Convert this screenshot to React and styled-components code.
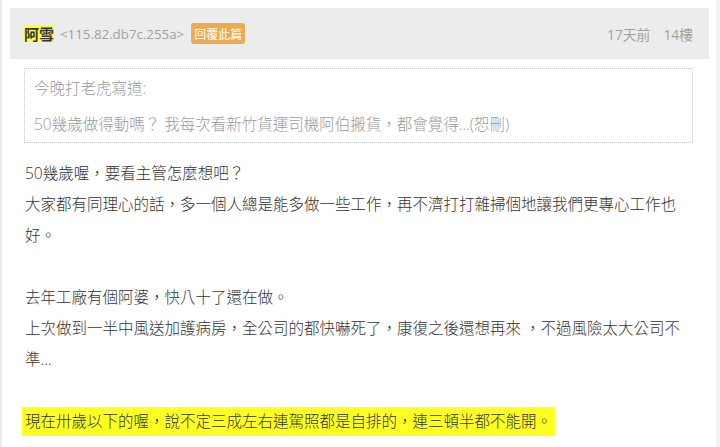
import React from "react";
import styled, { createGlobalStyle } from "styled-components";

const GlobalStyle = createGlobalStyle`
  html, body { margin: 0; padding: 0; background: #fff; }
  body { font-family: "Open Sans", "Noto Sans CJK TC", sans-serif; }
`;

const Page = styled.div`
  box-sizing: border-box;
  width: 720px;
  height: 447px;
  overflow: hidden;
  border-left: 2px solid #ededed;
  border-right: 4px solid #f2f2f2;
  padding: 8px 7px 0 8px;
`;

const Header = styled.div`
  display: flex;
  align-items: center;
  justify-content: space-between;
  height: 51px;
  background: #ececec;
  padding: 0 16px 0 14px;
`;

const Left = styled.div`
  display: flex;
  align-items: center;
  gap: 6px;
`;

const Name = styled.span`
  font-family: "Noto Sans CJK TC", sans-serif;
  font-weight: 700;
  font-size: 15px;
  line-height: 17px;
  color: #333;
  background: #ffff33;
`;

const Ip = styled.span`
  font-size: 13.3px;
  color: #a0a0a0;
`;

const ReplyButton = styled.span`
  display: inline-flex;
  align-items: center;
  justify-content: center;
  width: 54px;
  height: 21px;
  border-radius: 3px;
  background: #eeaa50;
  color: #fff;
  font-family: "Noto Sans CJK TC", sans-serif;
  font-size: 12px;
  margin-left: 1px;
`;

const Meta = styled.div`
  display: flex;
  gap: 13px;
  font-family: "Open Sans", "Noto Sans CJK TC", sans-serif;
  font-size: 13.8px;
  color: #a0a0a0;
`;

const Content = styled.div`
  padding: 0 16px 0 14px;
`;

const Quote = styled.div`
  margin-top: 9px;
  height: 75px;
  box-sizing: border-box;
  border: 1px dotted #c8c8c8;
  padding: 8px 9px 0;
  color: #9a9a9a;
  font-family: "Open Sans", "Noto Sans CJK TC", sans-serif;
  font-weight: 300;
  font-size: 15.5px;
`;

const QuoteLine = styled.div`
  line-height: 22px;
  & + & {
    margin-top: 14px;
  }
`;

const Body = styled.div`
  margin-top: 15px;
  padding-left: 1px;
  font-family: "Open Sans", "Noto Sans CJK TC", sans-serif;
  font-weight: 300;
  font-size: 15.5px;
  line-height: 31px;
  color: #333;
`;

const Line = styled.div`
  min-height: 31px;
`;

const Mark = styled.span`
  background: #ffff22;
  padding: 3px 3px 4px;
  margin-left: -3px;
`;

export default function App() {
  return (
    <>
      <GlobalStyle />
      <Page>
        <Header>
          <Left>
            <Name>阿雪</Name>
            <Ip>&lt;115.82.db7c.255a&gt;</Ip>
            <ReplyButton>回覆此篇</ReplyButton>
          </Left>
          <Meta>
            <span>17天前</span>
            <span>14樓</span>
          </Meta>
        </Header>
        <Content>
          <Quote>
            <QuoteLine>今晚打老虎寫道:</QuoteLine>
            <QuoteLine>50幾歲做得動嗎？ 我每次看新竹貨運司機阿伯搬貨，都會覺得...(恕刪)</QuoteLine>
          </Quote>
          <Body>
            <Line>50幾歲喔，要看主管怎麼想吧？</Line>
            <Line>大家都有同理心的話，多一個人總是能多做一些工作，再不濟打打雜掃個地讓我們更專心工作也</Line>
            <Line>好。</Line>
            <Line />
            <Line>去年工廠有個阿婆，快八十了還在做。</Line>
            <Line>上次做到一半中風送加護病房，全公司的都快嚇死了，康復之後還想再來 ，不過風險太大公司不</Line>
            <Line>準...</Line>
            <Line />
            <Line>
              <Mark>現在卅歲以下的喔，說不定三成左右連駕照都是自排的，連三頓半都不能開。</Mark>
            </Line>
          </Body>
        </Content>
      </Page>
    </>
  );
}
